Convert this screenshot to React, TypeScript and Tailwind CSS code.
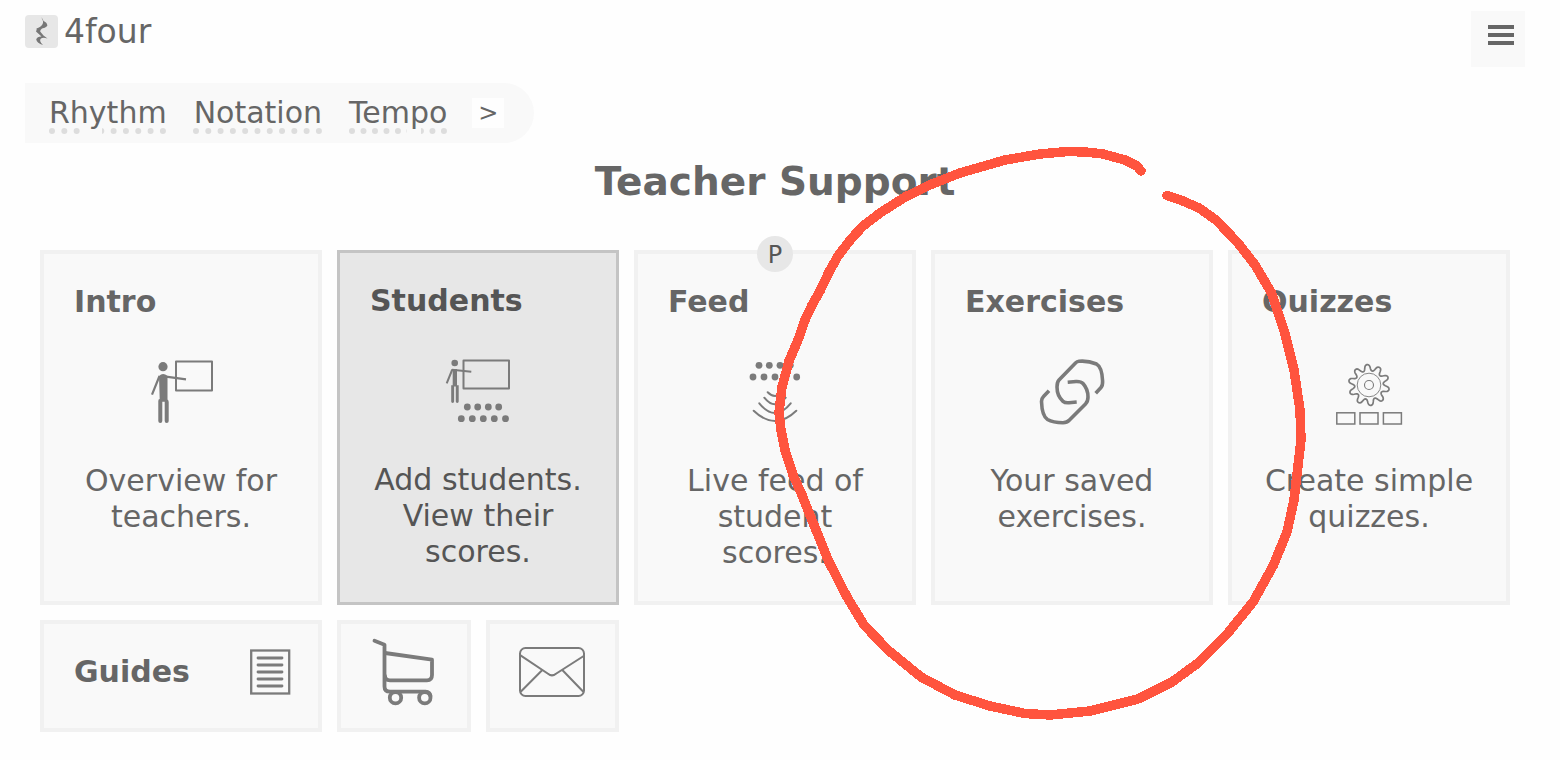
import type { ReactNode } from "react";

interface CardProps {
  title: string;
  text: string;
  icon: ReactNode;
  active?: boolean;
  badge?: string;
}

interface IconProps {
  children: ReactNode;
}

function Icon({ children }: IconProps) {
  return (
    <svg
      className="h-[66px] w-[66px] shrink-0 overflow-visible stroke-[#7b7b7b]"
      viewBox="0 0 66 66"
      fill="none"
      strokeWidth="2"
      aria-hidden="true"
    >
      {children}
    </svg>
  );
}

function Dots({ xs, y }: { xs: number[]; y: number }) {
  return (
    <g className="fill-[#7b7b7b]" stroke="none">
      {xs.map((x) => (
        <circle key={x} cx={x} cy={y} r="3.4" />
      ))}
    </g>
  );
}

// Ten rounded teeth around the gear's centre
function gearPath(cx: number, cy: number) {
  const points: string[] = [];
  for (let deg = 0; deg < 360; deg += 2) {
    const a = (deg * Math.PI) / 180;
    const phase = 10 * (a + 1.66);
    const r = 17.4 + 3.1 * Math.cos(phase);
    const skew = a + 0.02 * Math.sin(2 * phase);
    points.push(`${(cx + r * Math.cos(skew)).toFixed(2)},${(cy + r * Math.sin(skew)).toFixed(2)}`);
  }
  return `M${points.join("L")}Z`;
}

function IntroIcon() {
  return (
    <Icon>
      <rect x="28" y="3.5" width="36" height="29" strokeLinejoin="round" />
      <path d="M11.5 18L4 36.700M18 18.700L38 21.300" strokeWidth="2.2" />
      <g className="fill-[#7b7b7b]" stroke="none">
        <circle cx="15" cy="8.7" r="4.6" />
        <path d="M11 18Q15 14 19.500 18V41.500Q20.700 42 20.700 44V63A2 2 0 0 1 16.700 63V43.700H14.300V63A2 2 0 0 1 10.300 63V43Q10.300 41 11.700 41Z" />
      </g>
    </Icon>
  );
}

function StudentsIcon() {
  return (
    <Icon>
      <rect x="18.5" y="3.5" width="45.500" height="28" strokeLinejoin="round" />
      <path d="M7.3 12.500L1.700 26.300M7 12.700L26.300 14.700" />
      <g className="fill-[#7b7b7b]" stroke="none">
        <circle cx="9.7" cy="6" r="3.3" />
        <path d="M7.7 12H12V28.300H13.700V44.500A1.400 1.400 0 0 1 10.800 44.500V29.500H9.100V44.500A1.400 1.400 0 0 1 6.200 44.500V28.300H7.700Z" />
      </g>
      <Dots xs={[22.3, 32.7, 43.3, 53.7]} y={50} />
      <Dots xs={[16.3, 27.3, 38.3, 49.3, 60.5]} y={61.7} />
    </Icon>
  );
}

function FeedIcon() {
  return (
    <Icon>
      <Dots xs={[17, 27.3, 38, 48.3]} y={7.3} />
      <Dots xs={[11, 22, 33, 44, 54.7]} y={19} />
      <path
        strokeLinecap="round"
        d="M25.700 34.300Q33 41.700 40.300 34.300M22.300 39.700Q33 53 43.700 39.700M17.300 45.300Q33 64.700 48.700 45.300M11.700 52.700Q33 73.300 54.300 52.700"
      />
    </Icon>
  );
}

function ExercisesIcon() {
  return (
    <Icon>
      <g strokeWidth="3.6">
        <path d="M56.7 35.3L62 29.5Q63.8 27.5 63.6 23Q63 9 57.5 6Q49 2.5 40 3.3Q38 3.5 36.5 5L20 22Q18 24 18 29Q18 38 24 43.3Q26 45 30 44.7L37.7 44" />
        <path d="M28.7 24.2L37 23.5Q42 23.3 44 25.5Q49 31 49 39Q49 43.5 46.5 46L30.5 62Q28 64.7 24 64.7Q14 64.7 8.5 61.5Q3 58 2.5 43.5Q2.5 40.5 4.5 38.5L10 32.7" />
      </g>
    </Icon>
  );
}

function QuizzesIcon() {
  return (
    <Icon>
      <path d={gearPath(33, 27)} strokeWidth="1.7" />
      <circle cx="33" cy="27" r="11.8" strokeWidth="0.9" />
      <circle cx="33" cy="27" r="4.5" strokeWidth="1.1" />
      <g strokeWidth="1.5">
        <rect x="0.8" y="54.8" width="18" height="11.2" />
        <rect x="24" y="54.8" width="18" height="11.2" />
        <rect x="47.4" y="54.8" width="18" height="11.2" />
      </g>
    </Icon>
  );
}

function GuidesIcon() {
  return (
    <Icon>
      <rect x="14.2" y="11.5" width="38" height="43" strokeWidth="2.3" />
      <path strokeWidth="2.8" strokeLinecap="round" d="M21 19H45M21 26H45M21 33H45M21 40H45M21 47H45" />
    </Icon>
  );
}

function CartIcon() {
  return (
    <Icon>
      <g strokeWidth="3.8" strokeLinecap="round" strokeLinejoin="round">
        <path d="M3.500 1.700L13.500 5.700V47.500Q13.500 52.700 19 52.700H54.500Q59 53 59.500 57" />
        <path d="M14 14L61 20.700V36Q61 41.300 56 41.300H19Q14 41.300 14 37" />
        <circle cx="24.5" cy="58.7" r="5.7" />
        <circle cx="53.8" cy="58.7" r="5.7" />
      </g>
    </Icon>
  );
}

function MailIcon() {
  return (
    <Icon>
      <rect x="1" y="9" width="64" height="48" rx="5.5" />
      <path d="M1.500 16.300L29 34.700Q33 38 37 34.700L64.700 17M23.300 31L1.700 52.700M43.300 31L64.300 52.700" />
    </Icon>
  );
}

const tools = ["Rhythm", "Notation", "Tempo"];

const cards: CardProps[] = [
  { title: "Intro", text: "Overview for teachers.", icon: <IntroIcon /> },
  { title: "Students", text: "Add students. View their scores.", icon: <StudentsIcon />, active: true },
  { title: "Feed", text: "Live feed of student scores.", icon: <FeedIcon />, badge: "P" },
  { title: "Exercises", text: "Your saved exercises.", icon: <ExercisesIcon /> },
  { title: "Quizzes", text: "Create simple quizzes.", icon: <QuizzesIcon /> },
];

function Card({ title, text, icon, active, badge }: CardProps) {
  return (
    <a
      href="#"
      className={
        active
          ? "relative flex flex-col border-3 border-[#c4c4c4] bg-[#e7e7e7] p-[30px] text-[#555]"
          : "relative flex flex-col border-4 border-[#f1f1f1] bg-[#f9f9f9] p-[30px]"
      }
    >
      {badge && (
        <span className="absolute -top-[18px] left-1/2 flex h-9 w-9 -translate-x-1/2 items-center justify-center rounded-full bg-[#e7e7e7] pt-0.5 text-2xl text-[#555]">
          {badge}
        </span>
      )}
      <h2 className="text-[30px] leading-9 font-bold">{title}</h2>
      <div className="flex justify-center pt-[38px] pb-[39px]">{icon}</div>
      <p className="text-center text-[30px] leading-9">{text}</p>
    </a>
  );
}

// Freehand marker ring drawn over the page
function Scribble() {
  return (
    <svg
      className="pointer-events-none absolute top-[140px] left-[770px] h-[590px] w-[545px] stroke-[#ff543e]"
      viewBox="770 140 545 590"
      fill="none"
      strokeWidth="9.5"
      strokeLinecap="round"
      strokeLinejoin="round"
      shapeRendering="crispEdges"
      aria-hidden="true"
    >
      <path d="M1141 171L1137 166L1125 160L1103 154L1085 152L1068 151.500L1040 154L1005 160L960 173L932 184L905 197L880 213L863 226L851 239L838 256L829 272L820 291L812 305L805 320L798 340L789 361L782 387L779 412L781 430L785 450L793 475L802 495L814 525L829 562L847 597L864 625L888 650L921 677L955 695L990 706L1025 713.500L1050 715L1090 711L1138 699L1172 682L1198 663L1227 634L1253 602L1273 566L1287 532L1294 500L1301 440L1300 410L1294 370L1284 330L1271 292L1255 265L1238 243L1216 220L1199 208L1183 201L1167 195.500" />
    </svg>
  );
}

function App() {
  return (
    <div className="relative min-h-screen overflow-x-clip bg-[#fefefe] pr-[35px] pb-7 pl-[25px] font-['DejaVu_Sans',sans-serif] text-[#666]">
      <header className="flex items-start justify-between pt-[11px]">
        <a href="#" className="flex items-start gap-1.5 text-[33px] leading-10">
          <svg className="mt-1 h-[33px] w-[33px] rounded bg-[#e7e7e7] fill-[#777]" viewBox="0 0 33 33" aria-hidden="true">
            <path d="M15.500 1.500Q18 4 18.500 6Q22.500 7.500 22.300 11Q20 13 17 13.500Q15 15 15.200 16.500L18.500 20.500L22.500 23.500Q18 22 16 23.500Q13.500 25.500 18 30Q12 28 11.200 24.500Q12 21.500 16.500 21.500L11 16.500Q12 14.500 11.500 13.500Q17 11.500 18 8Q18.500 5 15.500 1.500Z" />
          </svg>
          <span className="pt-px">4four</span>
        </a>
        <button className="flex h-14 w-[54px] flex-col items-center justify-center gap-1 bg-[#f9f9f9] pb-2 pl-1.5" aria-label="Menu">
          <span className="h-1 w-[26px] bg-[#666]" />
          <span className="h-1 w-[26px] bg-[#666]" />
          <span className="h-1 w-[26px] bg-[#666]" />
        </button>
      </header>

      <nav className="mt-4 flex h-[60px] w-fit items-center gap-[27px] rounded-r-full bg-[#f9f9f9] pr-[30px] pl-6 text-[30px]">
        {tools.map((tool) => (
          <a
            key={tool}
            href="#"
            className="pb-0.5 underline decoration-[#ddd] decoration-dotted decoration-[6px] underline-offset-[6px]"
          >
            {tool}
          </a>
        ))}
        <button className="-ml-0.5 h-[30px] w-8 bg-[#fefefe] text-2xl leading-none" aria-label="More tools">
          &gt;
        </button>
      </nav>

      <main className="px-[15px]">
        <h1 className="pt-4 text-center text-[39px] leading-[46px] font-bold">Teacher Support</h1>
        <div className="mt-[45px] grid grid-cols-5 gap-[15px]">
          {cards.map((card) => (
            <Card key={card.title} {...card} />
          ))}
          <a href="#" className="flex justify-between border-4 border-[#f1f1f1] bg-[#f9f9f9] pt-[15px] pr-[15px] pb-[23px] pl-[30px]">
            <h2 className="text-[30px] leading-[66px] font-bold">Guides</h2>
            <GuidesIcon />
          </a>
          <div className="grid grid-cols-2 gap-[15px]">
            <a href="#" aria-label="Shop" className="flex justify-center border-4 border-[#f1f1f1] bg-[#f9f9f9] pt-[15px] pb-[23px]">
              <CartIcon />
            </a>
            <a href="#" aria-label="Contact" className="flex justify-center border-4 border-[#f1f1f1] bg-[#f9f9f9] pt-[15px] pb-[23px]">
              <MailIcon />
            </a>
          </div>
        </div>
      </main>

      <Scribble />
    </div>
  );
}

export default App;
